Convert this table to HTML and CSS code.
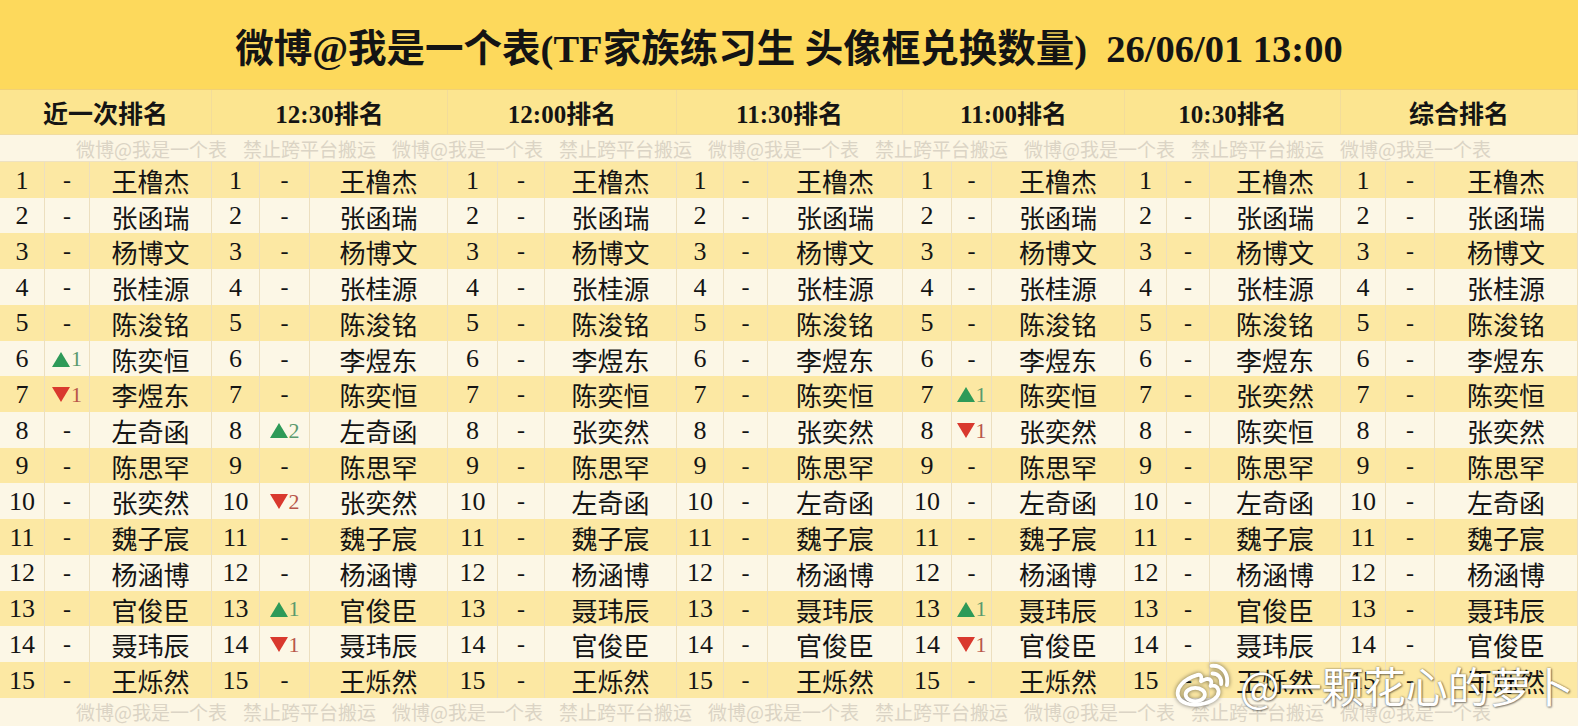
FILE: index.html
```html
<!DOCTYPE html>
<html lang="zh-CN">
<head>
<meta charset="utf-8">
<title>头像框兑换数量</title>
<link rel="stylesheet" href="styles.css">
</head>
<body>
<div class="sheet">
  <div class="title">微博@我是一个表(TF家族练习生 头像框兑换数量)  26/06/01 13:00</div>
  <div class="heads">
    <div class="head">近一次排名</div>
    <div class="head">12:30排名</div>
    <div class="head">12:00排名</div>
    <div class="head">11:30排名</div>
    <div class="head">11:00排名</div>
    <div class="head">10:30排名</div>
    <div class="head">综合排名</div>
  </div>
  <div class="wm">
    <span>微博@我是一个表</span><span>禁止跨平台搬运</span><span>微博@我是一个表</span><span>禁止跨平台搬运</span><span>微博@我是一个表</span><span>禁止跨平台搬运</span><span>微博@我是一个表</span><span>禁止跨平台搬运</span><span>微博@我是一个表</span>
  </div>
  <div class="rows">
    <div class="row">
      <span class="k">1</span><span class="d">-</span><span class="n">王橹杰</span>
      <span class="k">1</span><span class="d">-</span><span class="n">王橹杰</span>
      <span class="k">1</span><span class="d">-</span><span class="n">王橹杰</span>
      <span class="k">1</span><span class="d">-</span><span class="n">王橹杰</span>
      <span class="k">1</span><span class="d">-</span><span class="n">王橹杰</span>
      <span class="k">1</span><span class="d">-</span><span class="n">王橹杰</span>
      <span class="k">1</span><span class="d">-</span><span class="n">王橹杰</span>
    </div>
    <div class="row">
      <span class="k">2</span><span class="d">-</span><span class="n">张函瑞</span>
      <span class="k">2</span><span class="d">-</span><span class="n">张函瑞</span>
      <span class="k">2</span><span class="d">-</span><span class="n">张函瑞</span>
      <span class="k">2</span><span class="d">-</span><span class="n">张函瑞</span>
      <span class="k">2</span><span class="d">-</span><span class="n">张函瑞</span>
      <span class="k">2</span><span class="d">-</span><span class="n">张函瑞</span>
      <span class="k">2</span><span class="d">-</span><span class="n">张函瑞</span>
    </div>
    <div class="row">
      <span class="k">3</span><span class="d">-</span><span class="n">杨博文</span>
      <span class="k">3</span><span class="d">-</span><span class="n">杨博文</span>
      <span class="k">3</span><span class="d">-</span><span class="n">杨博文</span>
      <span class="k">3</span><span class="d">-</span><span class="n">杨博文</span>
      <span class="k">3</span><span class="d">-</span><span class="n">杨博文</span>
      <span class="k">3</span><span class="d">-</span><span class="n">杨博文</span>
      <span class="k">3</span><span class="d">-</span><span class="n">杨博文</span>
    </div>
    <div class="row">
      <span class="k">4</span><span class="d">-</span><span class="n">张桂源</span>
      <span class="k">4</span><span class="d">-</span><span class="n">张桂源</span>
      <span class="k">4</span><span class="d">-</span><span class="n">张桂源</span>
      <span class="k">4</span><span class="d">-</span><span class="n">张桂源</span>
      <span class="k">4</span><span class="d">-</span><span class="n">张桂源</span>
      <span class="k">4</span><span class="d">-</span><span class="n">张桂源</span>
      <span class="k">4</span><span class="d">-</span><span class="n">张桂源</span>
    </div>
    <div class="row">
      <span class="k">5</span><span class="d">-</span><span class="n">陈浚铭</span>
      <span class="k">5</span><span class="d">-</span><span class="n">陈浚铭</span>
      <span class="k">5</span><span class="d">-</span><span class="n">陈浚铭</span>
      <span class="k">5</span><span class="d">-</span><span class="n">陈浚铭</span>
      <span class="k">5</span><span class="d">-</span><span class="n">陈浚铭</span>
      <span class="k">5</span><span class="d">-</span><span class="n">陈浚铭</span>
      <span class="k">5</span><span class="d">-</span><span class="n">陈浚铭</span>
    </div>
    <div class="row">
      <span class="k">6</span><span class="d up">1</span><span class="n">陈奕恒</span>
      <span class="k">6</span><span class="d">-</span><span class="n">李煜东</span>
      <span class="k">6</span><span class="d">-</span><span class="n">李煜东</span>
      <span class="k">6</span><span class="d">-</span><span class="n">李煜东</span>
      <span class="k">6</span><span class="d">-</span><span class="n">李煜东</span>
      <span class="k">6</span><span class="d">-</span><span class="n">李煜东</span>
      <span class="k">6</span><span class="d">-</span><span class="n">李煜东</span>
    </div>
    <div class="row">
      <span class="k">7</span><span class="d down">1</span><span class="n">李煜东</span>
      <span class="k">7</span><span class="d">-</span><span class="n">陈奕恒</span>
      <span class="k">7</span><span class="d">-</span><span class="n">陈奕恒</span>
      <span class="k">7</span><span class="d">-</span><span class="n">陈奕恒</span>
      <span class="k">7</span><span class="d up">1</span><span class="n">陈奕恒</span>
      <span class="k">7</span><span class="d">-</span><span class="n">张奕然</span>
      <span class="k">7</span><span class="d">-</span><span class="n">陈奕恒</span>
    </div>
    <div class="row">
      <span class="k">8</span><span class="d">-</span><span class="n">左奇函</span>
      <span class="k">8</span><span class="d up">2</span><span class="n">左奇函</span>
      <span class="k">8</span><span class="d">-</span><span class="n">张奕然</span>
      <span class="k">8</span><span class="d">-</span><span class="n">张奕然</span>
      <span class="k">8</span><span class="d down">1</span><span class="n">张奕然</span>
      <span class="k">8</span><span class="d">-</span><span class="n">陈奕恒</span>
      <span class="k">8</span><span class="d">-</span><span class="n">张奕然</span>
    </div>
    <div class="row">
      <span class="k">9</span><span class="d">-</span><span class="n">陈思罕</span>
      <span class="k">9</span><span class="d">-</span><span class="n">陈思罕</span>
      <span class="k">9</span><span class="d">-</span><span class="n">陈思罕</span>
      <span class="k">9</span><span class="d">-</span><span class="n">陈思罕</span>
      <span class="k">9</span><span class="d">-</span><span class="n">陈思罕</span>
      <span class="k">9</span><span class="d">-</span><span class="n">陈思罕</span>
      <span class="k">9</span><span class="d">-</span><span class="n">陈思罕</span>
    </div>
    <div class="row">
      <span class="k">10</span><span class="d">-</span><span class="n">张奕然</span>
      <span class="k">10</span><span class="d down">2</span><span class="n">张奕然</span>
      <span class="k">10</span><span class="d">-</span><span class="n">左奇函</span>
      <span class="k">10</span><span class="d">-</span><span class="n">左奇函</span>
      <span class="k">10</span><span class="d">-</span><span class="n">左奇函</span>
      <span class="k">10</span><span class="d">-</span><span class="n">左奇函</span>
      <span class="k">10</span><span class="d">-</span><span class="n">左奇函</span>
    </div>
    <div class="row">
      <span class="k">11</span><span class="d">-</span><span class="n">魏子宸</span>
      <span class="k">11</span><span class="d">-</span><span class="n">魏子宸</span>
      <span class="k">11</span><span class="d">-</span><span class="n">魏子宸</span>
      <span class="k">11</span><span class="d">-</span><span class="n">魏子宸</span>
      <span class="k">11</span><span class="d">-</span><span class="n">魏子宸</span>
      <span class="k">11</span><span class="d">-</span><span class="n">魏子宸</span>
      <span class="k">11</span><span class="d">-</span><span class="n">魏子宸</span>
    </div>
    <div class="row">
      <span class="k">12</span><span class="d">-</span><span class="n">杨涵博</span>
      <span class="k">12</span><span class="d">-</span><span class="n">杨涵博</span>
      <span class="k">12</span><span class="d">-</span><span class="n">杨涵博</span>
      <span class="k">12</span><span class="d">-</span><span class="n">杨涵博</span>
      <span class="k">12</span><span class="d">-</span><span class="n">杨涵博</span>
      <span class="k">12</span><span class="d">-</span><span class="n">杨涵博</span>
      <span class="k">12</span><span class="d">-</span><span class="n">杨涵博</span>
    </div>
    <div class="row">
      <span class="k">13</span><span class="d">-</span><span class="n">官俊臣</span>
      <span class="k">13</span><span class="d up">1</span><span class="n">官俊臣</span>
      <span class="k">13</span><span class="d">-</span><span class="n">聂玮辰</span>
      <span class="k">13</span><span class="d">-</span><span class="n">聂玮辰</span>
      <span class="k">13</span><span class="d up">1</span><span class="n">聂玮辰</span>
      <span class="k">13</span><span class="d">-</span><span class="n">官俊臣</span>
      <span class="k">13</span><span class="d">-</span><span class="n">聂玮辰</span>
    </div>
    <div class="row">
      <span class="k">14</span><span class="d">-</span><span class="n">聂玮辰</span>
      <span class="k">14</span><span class="d down">1</span><span class="n">聂玮辰</span>
      <span class="k">14</span><span class="d">-</span><span class="n">官俊臣</span>
      <span class="k">14</span><span class="d">-</span><span class="n">官俊臣</span>
      <span class="k">14</span><span class="d down">1</span><span class="n">官俊臣</span>
      <span class="k">14</span><span class="d">-</span><span class="n">聂玮辰</span>
      <span class="k">14</span><span class="d">-</span><span class="n">官俊臣</span>
    </div>
    <div class="row">
      <span class="k">15</span><span class="d">-</span><span class="n">王烁然</span>
      <span class="k">15</span><span class="d">-</span><span class="n">王烁然</span>
      <span class="k">15</span><span class="d">-</span><span class="n">王烁然</span>
      <span class="k">15</span><span class="d">-</span><span class="n">王烁然</span>
      <span class="k">15</span><span class="d">-</span><span class="n">王烁然</span>
      <span class="k">15</span><span class="d">-</span><span class="n">王烁然</span>
      <span class="k">15</span><span class="d">-</span><span class="n">王烁然</span>
    </div>
  </div>
  <div class="wm wm-bottom">
    <span>微博@我是一个表</span><span>禁止跨平台搬运</span><span>微博@我是一个表</span><span>禁止跨平台搬运</span><span>微博@我是一个表</span><span>禁止跨平台搬运</span><span>微博@我是一个表</span><span>禁止跨平台搬运</span><span>微博@我是一个表</span>
  </div>
  <div class="credit">
    <svg class="weibo-logo" viewBox="0 0 60 50" width="58" height="48" aria-hidden="true">
      <g fill="none" stroke="#fff" stroke-width="4" stroke-linecap="round" stroke-linejoin="round">
        <path d="M25 15 C12 19 4 28 6 36 C8 44 20 47 30 45 C42 43 50 37 48 30 C47 26 43 25 40 26 C42 21 40 18 35 19 C32 20 30 21 30 21 C31 16 30 13 25 15 Z"/>
        <ellipse cx="24" cy="35" rx="10" ry="7"/>
        <path d="M42 13 C48 13 52 18 51 24"/>
        <path d="M41 5 C52 4 59 13 57 25"/>
      </g>
    </svg>
    <span class="credit-text">@一颗花心的萝卜</span>
  </div>
</div>
</body>
</html>
```

FILE: styles.css
```css
* { box-sizing: border-box; }

body {
  margin: 0;
  background: #fcf6e3;
}

.sheet {
  position: relative;
  width: 1578px;
  height: 726px;
  overflow: hidden;
  display: flex;
  flex-direction: column;
  background: #fcf5e1;
  color: #141414;
}

.title {
  height: 90px;
  flex: none;
  display: flex;
  align-items: center;
  justify-content: center;
  background: #fdd95c;
  border-bottom: 1px solid #f1d175;
  font: bold 38.5px "Liberation Serif", "Noto Sans CJK SC", serif;
  white-space: pre;
}

.heads {
  height: 45px;
  flex: none;
  display: grid;
  grid-template-columns: 212px 236px 229px 226px 222px 216px 237px;
  background: #fce590;
  border-bottom: 1px solid #f1dca0;
}

.head {
  display: flex;
  align-items: center;
  justify-content: center;
  border-right: 1px solid #f2dc9a;
  font: bold 25px "Liberation Serif", "Noto Sans CJK SC", serif;
}

.wm {
  height: 27px;
  flex: none;
  display: flex;
  align-items: center;
  gap: 16px;
  padding-left: 76px;
  background: #fcf6e4;
  border-bottom: 1px solid #eee2c2;
  font: 19px "Noto Sans CJK SC", sans-serif;
  color: #dbd4c5;
  white-space: nowrap;
  overflow: hidden;
}

.wm-bottom {
  height: 28px;
  border-bottom: none;
}

.rows {
  flex: none;
  display: flex;
  flex-direction: column;
}

.row {
  height: 35.73px;
  display: grid;
  grid-template-columns:
    45px 45px 122px
    48px 50px 138px
    50px 47px 132px
    47px 44px 135px
    49px 40px 133px
    42px 43px 131px
    45px 49px 143px;
  background: #fcf7e6;
}

.row:nth-child(odd) {
  background: #fce8a3;
}

.k, .d, .n {
  display: flex;
  align-items: center;
  justify-content: center;
  border-right: 1px solid #ecdfbf;
  border-bottom: 1px solid #ecdfbf;
}

.k {
  font: 26px "Liberation Serif", serif;
}

.d {
  font: 24px "Liberation Serif", serif;
}

.n {
  font: 26px "Noto Sans CJK SC", sans-serif;
}

.up, .down {
  gap: 1px;
  font-size: 22px;
}

.up { color: #5a9a6e; }
.down { color: #b8574a; }

.up::before {
  content: "";
  width: 0;
  height: 0;
  border-left: 9px solid transparent;
  border-right: 9px solid transparent;
  border-bottom: 15px solid #2e9a58;
}

.down::before {
  content: "";
  width: 0;
  height: 0;
  border-left: 9px solid transparent;
  border-right: 9px solid transparent;
  border-top: 15px solid #d9392e;
}

.credit {
  position: absolute;
  left: 1172px;
  top: 654px;
  display: flex;
  align-items: center;
  gap: 10px;
  color: #ffffff;
}

.weibo-logo {
  filter: drop-shadow(0 0 2px rgba(0, 0, 0, 0.55));
}

.credit-text {
  font: 42px "Noto Sans CJK SC", sans-serif;
  letter-spacing: 0;
  text-shadow: 0 0 2px rgba(0, 0, 0, 0.6), 1px 1px 2px rgba(0, 0, 0, 0.4);
}
```
